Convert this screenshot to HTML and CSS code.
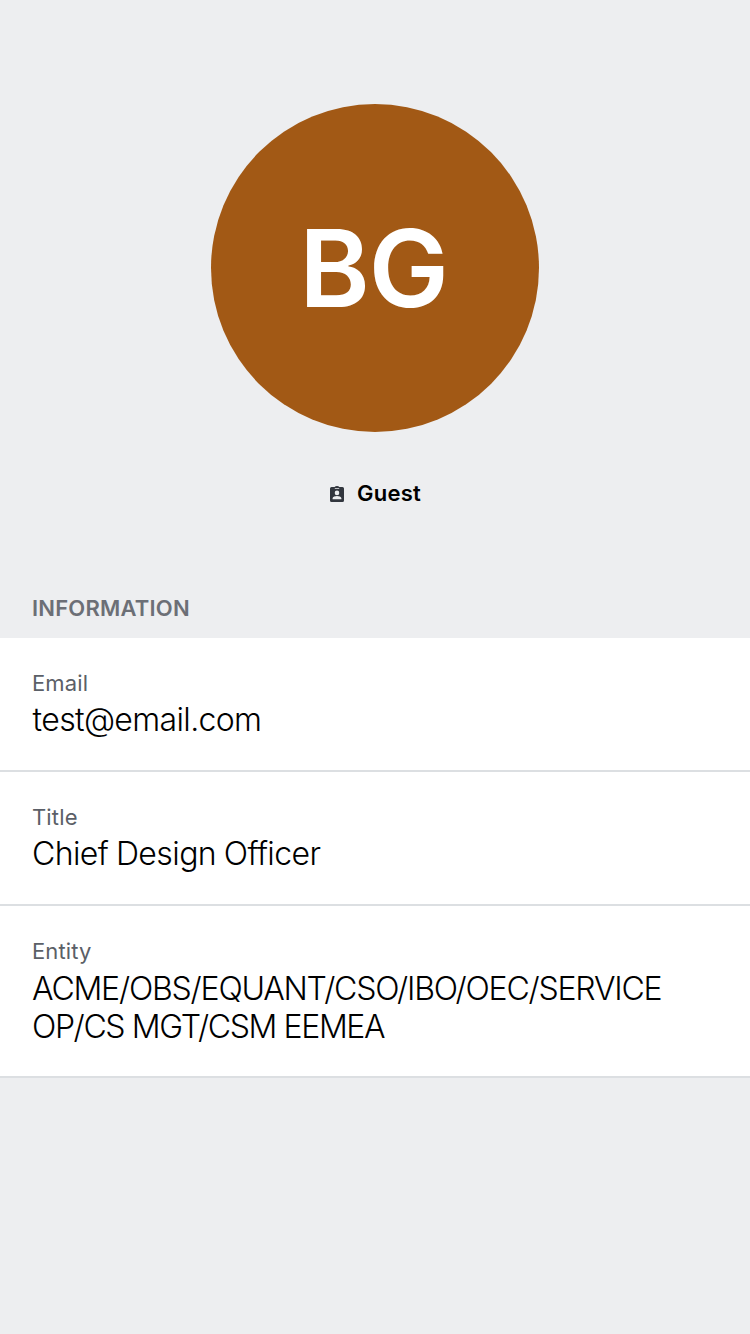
FILE: index.html
```html
<!DOCTYPE html>
<html lang="en">
<head>
<meta charset="utf-8">
<title>Profile</title>
<link rel="stylesheet" href="styles.css">
</head>
<body>
<main class="profile">
  <header class="hero">
    <div class="avatar"><span class="initials">BG</span></div>
    <div class="role">
      <svg class="role-icon" width="14" height="16" viewBox="0 0 14 16" aria-hidden="true">
        <path fill="#32363e" fill-rule="evenodd" d="M1.500 1h3.200a2.400 1.300 0 0 1 4.600 0h3.200a1.500 1.500 0 0 1 1.500 1.500v12a1.500 1.500 0 0 1-1.500 1.500h-11A1.500 1.500 0 0 1 0 14.500v-12A1.500 1.500 0 0 1 1.500 1zM4.800 2v.7h4.400V2zM7 4.600a2.300 2.300 0 1 0 0 4.600a2.300 2.300 0 0 0 0-4.600zM2.600 13.200h8.800v-1c0-1.300-2.600-2.200-4.400-2.200s-4.400.9-4.400 2.200z"/>
      </svg>
      <span class="role-label">Guest</span>
    </div>
  </header>
  <h2 class="section-title">INFORMATION</h2>
  <dl class="details">
    <div class="row"><dt class="label">Email</dt><dd class="value value-email">test@email.com</dd></div>
    <div class="row"><dt class="label">Title</dt><dd class="value value-title">Chief Design Officer</dd></div>
    <div class="row row-entity"><dt class="label">Entity</dt><dd class="value value-entity">ACME/OBS/EQUANT/CSO/IBO/OEC/SERVICE<br><span class="entity-end">OP/CS MGT/CSM EEMEA</span></dd></div>
  </dl>
</main>
</body>
</html>
```
FILE: styles.css
```css
* { box-sizing: border-box; }
body { margin: 0; background: #edeef0; color: #000; font-family: Inter, "Liberation Sans", sans-serif; }
.profile { min-height: 1334px; }
.hero { height: 588px; padding-top: 104px; display: flex; flex-direction: column; align-items: center; }
.avatar { width: 328px; height: 328px; border-radius: 50%; background: #a25915; display: flex; align-items: center; justify-content: center; }
.initials { color: #fff; font-size: 107px; font-weight: 600; line-height: 1; letter-spacing: -1px; padding-right: 3px; }
.role { display: flex; align-items: center; gap: 13px; margin-top: 46px; height: 32px; padding-left: 1px; }
.role-icon { display: block; }
.role-label { font-size: 22px; font-weight: 600; line-height: 30px; letter-spacing: .2px; padding-bottom: 2px; }
.section-title { margin: 0; height: 50px; padding: 4px 32px 0; color: #6c6f76; font-size: 22px; font-weight: 600; line-height: 32px; letter-spacing: .2px; }
.details { margin: 0; }
.row { height: 134px; padding: 29px 32px 0; background: #fff; border-bottom: 2px solid #dcdfe2; }
.row-entity { height: 172px; }
.label { color: #5b5f67; font-size: 22px; line-height: 32px; letter-spacing: .15px; }
.value { margin: 0; font-size: 32px; font-weight: 300; line-height: 38px; white-space: nowrap; padding-top: 2px; }
.value-email { letter-spacing: -.64px; padding-left: .6px; }
.value-title { letter-spacing: -.58px; word-spacing: -.8px; font-variant-ligatures: none; }
.value-entity { letter-spacing: -1.2px; padding-top: 3px; }
.entity-end { letter-spacing: -1.38px; }
```
